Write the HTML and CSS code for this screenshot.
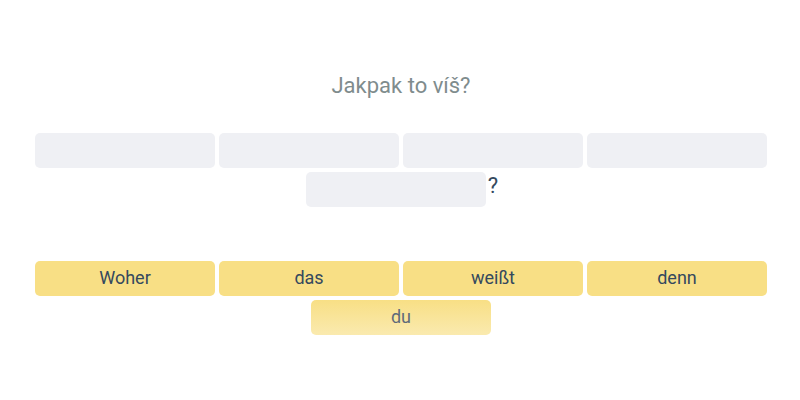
FILE: index.html
```html
<!DOCTYPE html>
<html>
<head>
<meta charset="utf-8">
<link rel="stylesheet" href="styles.css">
</head>
<body>
<div class="page">
  <h1 class="title">Jakpak to víš?</h1>
  <div class="answer">
    <div class="slot"></div>
    <div class="slot"></div>
    <div class="slot"></div>
    <div class="slot"></div>
    <div class="slot-group"><div class="slot"></div><span class="punct">?</span></div>
  </div>
  <div class="words">
    <div class="word">Woher</div>
    <div class="word">das</div>
    <div class="word">weißt</div>
    <div class="word">denn</div>
    <div class="word word-fading">du</div>
  </div>
</div>
</body>
</html>
```

FILE: styles.css
```css
html, body {
  margin: 0;
  padding: 0;
  background: #ffffff;
  font-family: Roboto, "Liberation Sans", sans-serif;
}
.page {
  width: 732px;
  margin: 0 0 0 35px;
  padding-top: 71px;
}
.title {
  margin: 0;
  font-size: 22px;
  font-weight: 400;
  line-height: 30px;
  color: #7f8c8d;
  text-align: center;
}
.answer {
  margin-top: 32px;
  display: flex;
  flex-wrap: wrap;
  justify-content: center;
  gap: 4px;
}
.slot {
  width: 180px;
  height: 35px;
  border-radius: 5px;
  background: #eff0f4;
}
.slot-group {
  display: flex;
  align-items: flex-start;
  gap: 2px;
  padding-left: 2px;
}
.punct {
  font-size: 22px;
  color: #34495e;
  line-height: 28px;
}
.words {
  margin-top: 54px;
  display: flex;
  flex-wrap: wrap;
  justify-content: center;
  gap: 4px;
}
.word {
  width: 180px;
  height: 35px;
  border-radius: 5px;
  background: #f8df85;
  color: #34495e;
  font-size: 18px;
  line-height: 33px;
  text-align: center;
}
.word-fading {
  background: linear-gradient(#f8df85, #faeaaf);
  color: #5f6b7a;
}
```
